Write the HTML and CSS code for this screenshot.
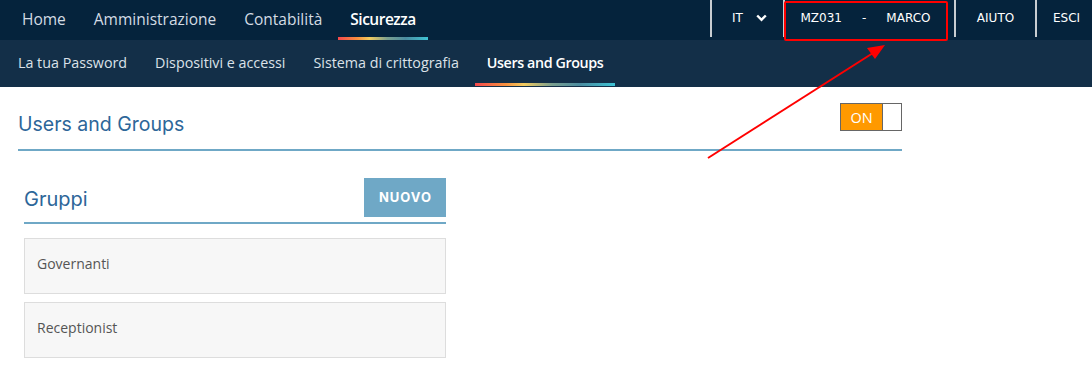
FILE: index.html
```html
<!DOCTYPE html>
<html lang="it">
<head>
<meta charset="utf-8">
<title>Users and Groups</title>
<link rel="stylesheet" href="styles.css">
</head>
<body>
<header class="topbar">
  <nav class="mainnav">
    <a class="mainnav-item">Home</a>
    <a class="mainnav-item">Amministrazione</a>
    <a class="mainnav-item">Contabilità</a>
    <a class="mainnav-item active">Sicurezza</a>
  </nav>
  <div class="tools">
    <div class="tool tool-lang">IT
      <svg class="chevron" width="11" height="8" viewBox="0 0 11 8"><polyline points="1.2,1.5 5.5,5.8 9.8,1.5" fill="none" stroke="#ffffff" stroke-width="2.4"/></svg>
    </div>
    <div class="tool tool-user"><span>MZ031</span><span>-</span><span>MARCO</span></div>
    <div class="tool tool-help">AIUTO</div>
    <div class="tool tool-exit">ESCI</div>
  </div>
</header>
<nav class="subbar">
  <a class="subnav-item">La tua Password</a>
  <a class="subnav-item">Dispositivi e accessi</a>
  <a class="subnav-item">Sistema di crittografia</a>
  <a class="subnav-item active">Users and Groups</a>
</nav>
<main class="content">
  <div class="page-head">
    <h1 class="page-title">Users and Groups</h1>
    <div class="toggle"><span class="toggle-on">ON</span><span class="toggle-off"></span></div>
  </div>
  <section class="groups">
    <div class="groups-head">
      <h2 class="groups-title">Gruppi</h2>
      <button class="btn-new">NUOVO</button>
    </div>
    <div class="group-card">Governanti</div>
    <div class="group-card">Receptionist</div>
  </section>
</main>
<div class="annot-box"></div>
<svg class="annot-arrow" width="1092" height="374" viewBox="0 0 1092 374">
  <line x1="708" y1="158" x2="873" y2="53" stroke="#ff0000" stroke-width="2"/>
  <polygon points="885,45 867,48 875,59" fill="#ff0000"/>
</svg>
</body>
</html>
```

FILE: styles.css
```css
* { box-sizing: border-box; }
html, body { margin: 0; padding: 0; }
body {
  background: #ffffff;
  font-family: "Open Sans", "Noto Sans", sans-serif;
  width: 1092px;
  height: 374px;
  overflow: hidden;
  position: relative;
}
a { text-decoration: none; cursor: pointer; }

.topbar {
  height: 40px;
  background: #05233c;
  display: flex;
  align-items: stretch;
}
.mainnav {
  display: flex;
  padding-left: 8px;
}
.mainnav-item {
  margin: 0 2px;
  padding: 0 12px;
  display: flex;
  align-items: center;
  font-size: 15.5px;
  color: #d4dce4;
  position: relative;
  padding-bottom: 2px;
}
.mainnav-item.active {
  color: #ffffff;
  font-weight: 600;
  letter-spacing: -0.5px;
}
.mainnav-item.active::after,
.subnav-item.active::after {
  content: "";
  position: absolute;
  left: 0;
  right: 0;
  bottom: 0;
  height: 3px;
  background: linear-gradient(90deg, #f4484c 0%, #f7913f 22%, #f2cb5f 35%, #7a9f8f 55%, #4b8ca0 75%, #3ec3d4 100%);
}

.tools {
  margin-left: auto;
  display: flex;
  font-family: "DejaVu Sans", sans-serif;
  font-size: 12px;
  color: #ffffff;
}
.tool {
  display: flex;
  align-items: center;
  justify-content: center;
  height: 37px;
  border-left: 2px solid #c9cdd1;
  padding-bottom: 1px;
}
.tool-lang { width: 73px; gap: 13px; padding-left: 4px; }
.chevron { margin-top: -1px; }
.tool-user { width: 171px; gap: 20px; padding-right: 8px; }
.tool-help { width: 81px; }
.tool-exit { width: 57px; padding-left: 4px; }

.subbar {
  height: 47px;
  background: #132f48;
  display: flex;
  padding-left: 4px;
}
.subnav-item {
  margin: 0 2px;
  padding: 0 12px 3px;
  display: flex;
  align-items: center;
  font-size: 14.3px;
  color: #dbe2e9;
  position: relative;
}
.subnav-item.active {
  color: #ffffff;
  font-weight: 600;
  letter-spacing: -0.4px;
}
.subnav-item.active::after { bottom: 1px; }

.content {
  padding-left: 18px;
  width: 902px;
}
.page-head {
  display: flex;
  justify-content: space-between;
  align-items: flex-start;
  border-bottom: 2px solid #6fa8c6;
  padding-bottom: 13px;
}
.page-title {
  margin: 25px 0 0;
  font-family: "Inter", "Noto Sans", sans-serif;
  font-weight: 400;
  font-size: 19.5px;
  line-height: 24px;
  color: #2d6699;
}
.toggle {
  margin-top: 16px;
  display: flex;
  height: 28px;
  width: 62px;
  border: 1px solid #666666;
}
.toggle-on {
  width: 42px;
  background: #ff9900;
  color: #ffffff;
  font-size: 14.5px;
  font-weight: 500;
  display: flex;
  align-items: center;
  justify-content: center;
  border-right: 1px solid #666666;
}
.toggle-off { flex: 1; background: #ffffff; }

.groups {
  margin-left: 6px;
  width: 422px;
}
.groups-head {
  display: flex;
  justify-content: space-between;
  align-items: center;
  margin-top: 27px;
  padding-bottom: 5px;
  border-bottom: 2px solid #6fa8c6;
  margin-bottom: 14px;
}
.groups-title {
  margin: 0;
  font-family: "Inter", "Noto Sans", sans-serif;
  font-weight: 400;
  font-size: 20px;
  color: #2d6699;
  padding-top: 2px;
}
.btn-new {
  width: 82px;
  height: 39px;
  border: none;
  background: #6fa8c6;
  color: #ffffff;
  font-family: "Inter", "Noto Sans", sans-serif;
  font-weight: 700;
  font-size: 13px;
  letter-spacing: 1px;
  padding: 0 0 2px 1px;
}
.group-card {
  height: 56px;
  background: #f7f7f7;
  border: 1px solid #dddddd;
  padding: 0 12px 5px;
  display: flex;
  align-items: center;
  font-size: 14px;
  color: #555555;
  margin-bottom: 8px;
}

.annot-box {
  position: absolute;
  left: 784px;
  top: 1px;
  width: 164px;
  height: 40px;
  border: 2px solid #ff0000;
  border-radius: 2px;
}
.annot-arrow {
  position: absolute;
  left: 0;
  top: 0;
  pointer-events: none;
}
```
